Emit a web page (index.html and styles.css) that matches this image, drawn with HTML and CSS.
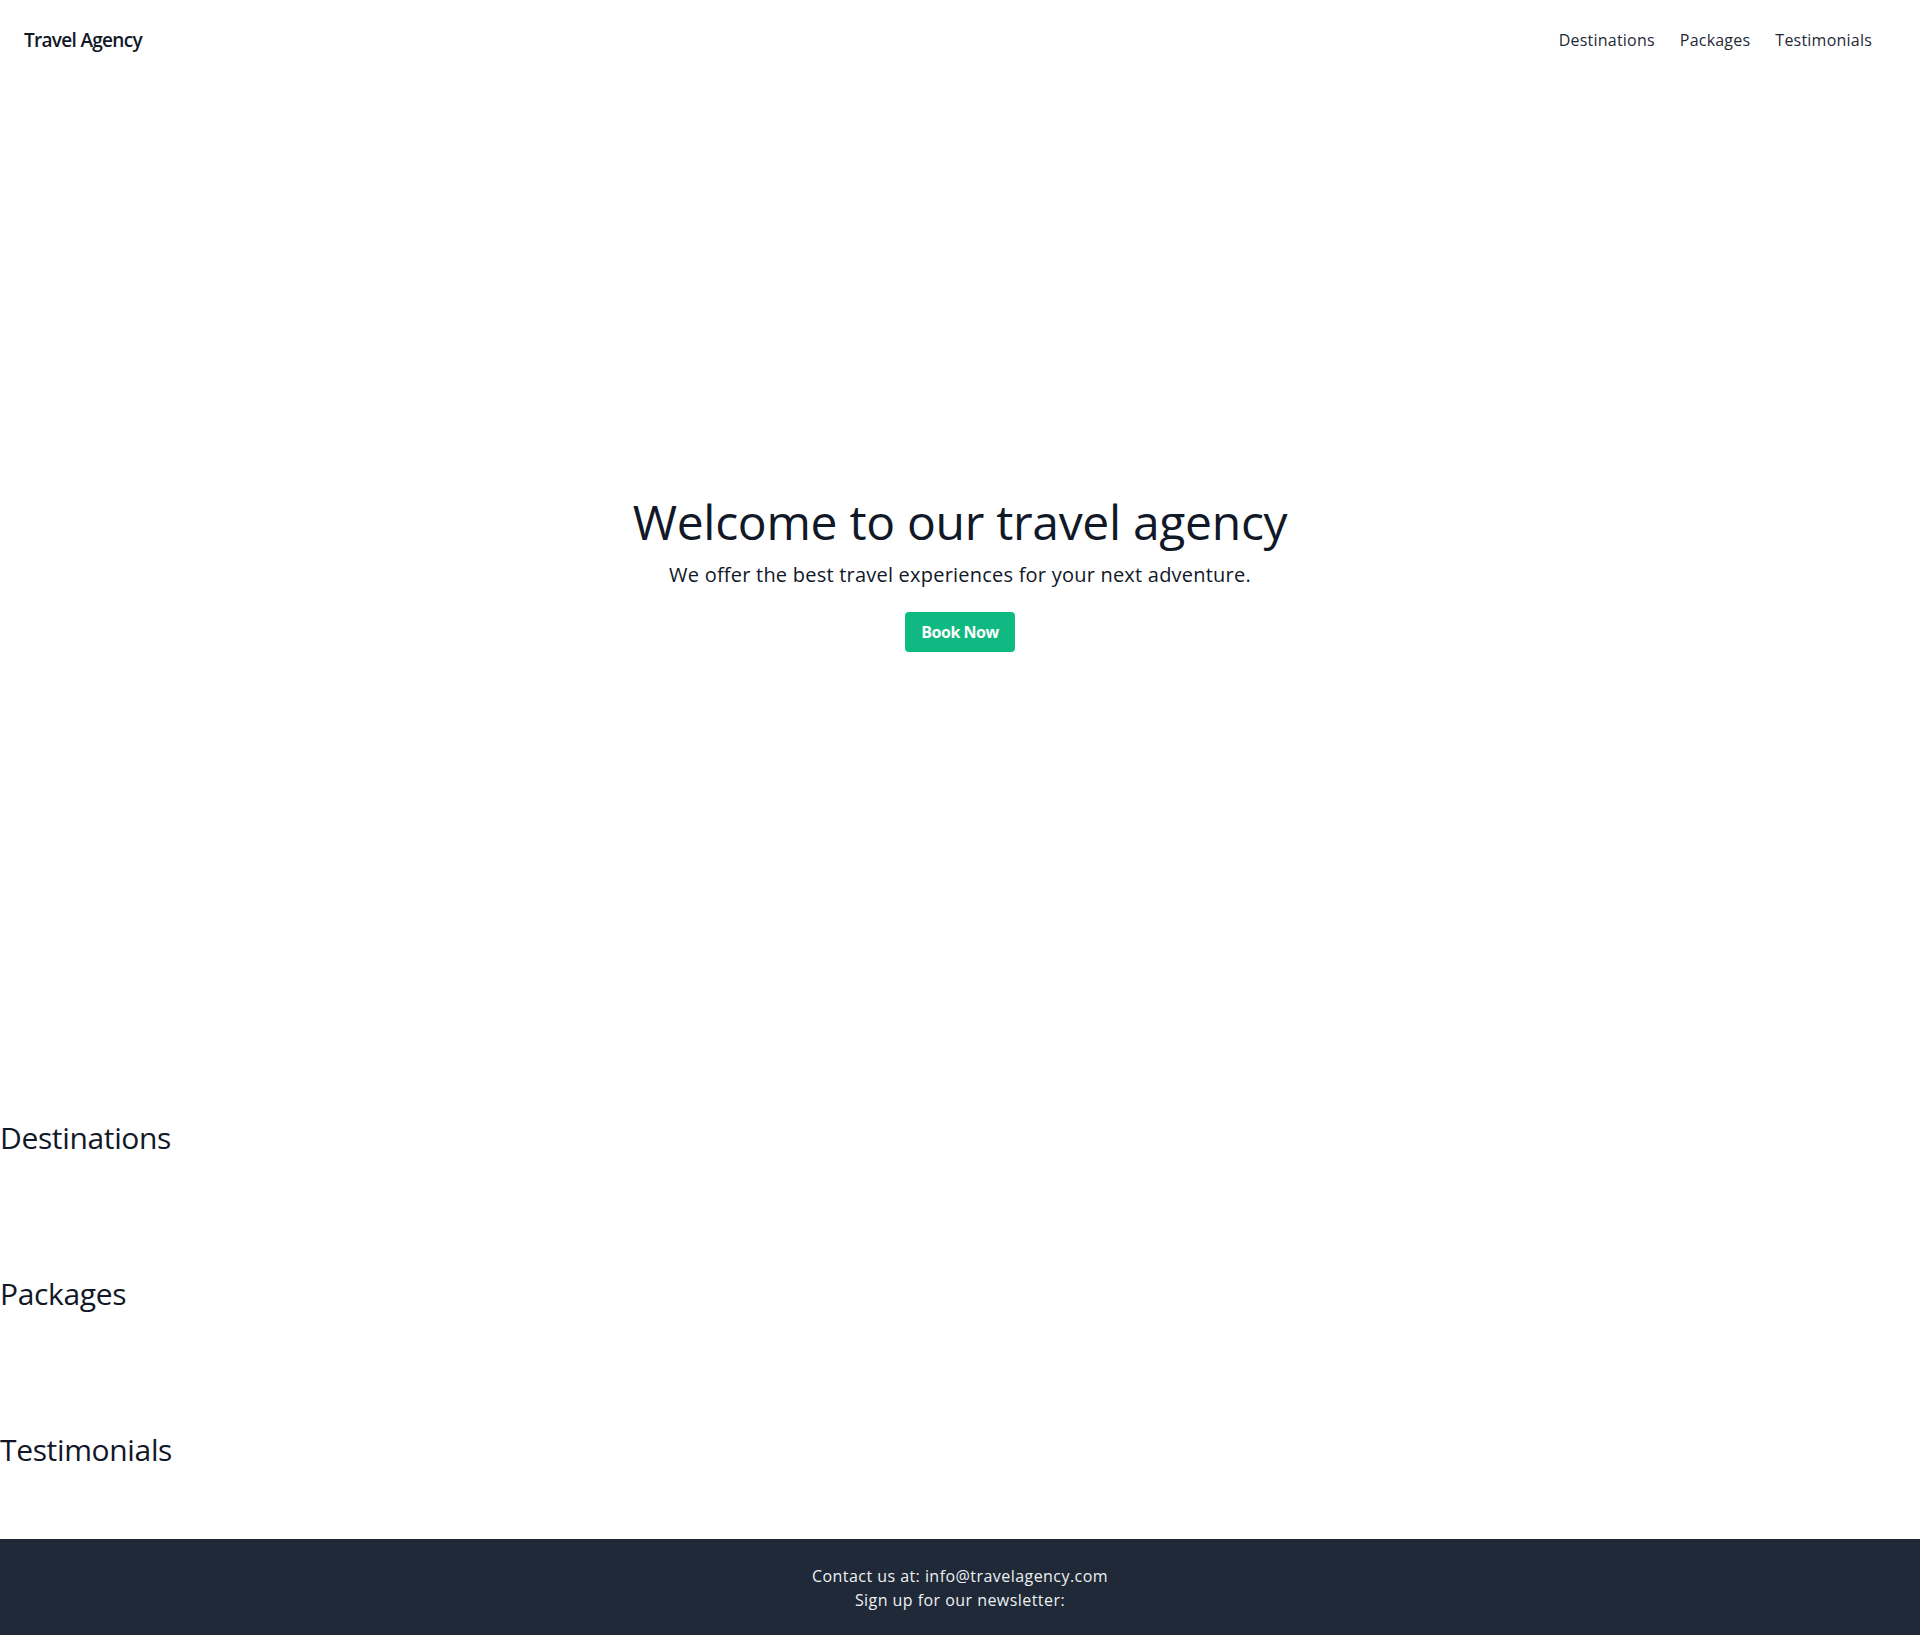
FILE: index.html
```html
<!DOCTYPE html>
<html lang="en">
<head>
<meta charset="utf-8">
<title>Travel Agency</title>
<link rel="stylesheet" href="styles.css">
</head>
<body>
<header class="site-header">
  <div class="brand">Travel Agency</div>
  <nav class="nav">
    <a href="#destinations">Destinations</a>
    <a href="#packages">Packages</a>
    <a href="#testimonials">Testimonials</a>
  </nav>
</header>
<section class="hero">
  <div class="hero-inner">
    <h1 class="hero-title">Welcome to our travel agency</h1>
    <p class="hero-sub">We offer the best travel experiences for your next adventure.</p>
    <a class="btn" href="#">Book Now</a>
  </div>
</section>
<section class="block" id="destinations"><h2 class="block-title">Destinations</h2></section>
<section class="block" id="packages"><h2 class="block-title">Packages</h2></section>
<section class="block" id="testimonials"><h2 class="block-title">Testimonials</h2></section>
<footer class="site-footer">
  <p>Contact us at: info@travelagency.com</p>
  <p>Sign up for our newsletter:</p>
</footer>
</body>
</html>
```
FILE: styles.css
```css
* { box-sizing: border-box; }
html, body { margin: 0; padding: 0; }
body {
  font-family: "Open Sans", "Noto Sans", sans-serif;
  color: #111827;
  background: #ffffff;
}
a { color: inherit; text-decoration: none; }
.site-header {
  display: flex;
  justify-content: space-between;
  align-items: center;
  padding: 26px 48px 22px 24px;
}
.brand {
  font-size: 19px;
  line-height: 28px;
  font-weight: 600;
  letter-spacing: -0.7px;
  color: #111827;
}
.nav {
  display: flex;
  gap: 25px;
  font-size: 16px;
  line-height: 24px;
  letter-spacing: 0.22px;
  color: #1f2937;
}
.hero {
  height: 995px;
  padding-top: 3px;
  display: flex;
  align-items: center;
  justify-content: center;
  text-align: center;
}
.hero-inner {
  display: flex;
  flex-direction: column;
  align-items: center;
}
.hero-title {
  margin: 0 0 15px;
  font-size: 48px;
  line-height: 48px;
  font-weight: 400;
  letter-spacing: -0.3px;
}
.hero-sub {
  margin: 0 0 23px;
  font-size: 20px;
  line-height: 28px;
  letter-spacing: 0.22px;
}
.btn {
  display: inline-block;
  background: #10b981;
  color: #ffffff;
  font-weight: 700;
  font-size: 16px;
  line-height: 24px;
  letter-spacing: -0.45px;
  padding: 8px 16px;
  border-radius: 4px;
}
.block {
  padding: 49px 0 47px;
}
.block-title {
  margin: 0 0 24px;
  font-size: 30px;
  line-height: 36px;
  font-weight: 400;
  letter-spacing: -0.35px;
}
.site-footer {
  background: #1f2937;
  color: #eef0f3;
  text-align: center;
  padding: 25px 0 23px;
  font-size: 16px;
  line-height: 24px;
  letter-spacing: 0.45px;
}
.site-footer p { margin: 0; }
```
